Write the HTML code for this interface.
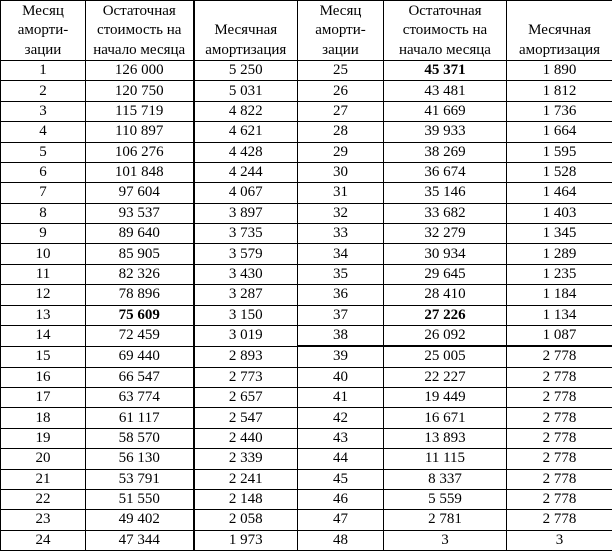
<!DOCTYPE html>
<html><head><meta charset="utf-8">
<style>
html,body{margin:0;padding:0;background:#fff;}
table{border-collapse:collapse;table-layout:fixed;width:612px;font-family:"Liberation Serif",serif;font-size:15px;color:#000;}
td{border:1px solid #000;text-align:center;padding:0;line-height:19px;height:19.375px;overflow:hidden;white-space:nowrap;}
tr.h td{height:59px;vertical-align:bottom;line-height:19.5px;}
td.c3{border-left:2px solid #000;}
tr.tk td.r{border-bottom:2px solid #000;}
b{font-weight:bold;}
</style></head><body>
<table>
<colgroup><col style="width:85px"><col style="width:108px"><col style="width:104px"><col style="width:86px"><col style="width:123px"><col style="width:106px"></colgroup>
<tr class="h"><td>Месяц<br>аморти-<br>зации</td><td>Остаточная<br>стоимость на<br>начало месяца</td><td class="c3">Месячная<br>амортизация</td><td>Месяц<br>аморти-<br>зации</td><td>Остаточная<br>стоимость на<br>начало месяца</td><td>Месячная<br>амортизация</td></tr>
<tr><td>1</td><td>126 000</td><td class="c3">5 250</td><td>25</td><td><b>45 371</b></td><td>1 890</td></tr>
<tr><td>2</td><td>120 750</td><td class="c3">5 031</td><td>26</td><td>43 481</td><td>1 812</td></tr>
<tr><td>3</td><td>115 719</td><td class="c3">4 822</td><td>27</td><td>41 669</td><td>1 736</td></tr>
<tr><td>4</td><td>110 897</td><td class="c3">4 621</td><td>28</td><td>39 933</td><td>1 664</td></tr>
<tr><td>5</td><td>106 276</td><td class="c3">4 428</td><td>29</td><td>38 269</td><td>1 595</td></tr>
<tr><td>6</td><td>101 848</td><td class="c3">4 244</td><td>30</td><td>36 674</td><td>1 528</td></tr>
<tr><td>7</td><td>97 604</td><td class="c3">4 067</td><td>31</td><td>35 146</td><td>1 464</td></tr>
<tr><td>8</td><td>93 537</td><td class="c3">3 897</td><td>32</td><td>33 682</td><td>1 403</td></tr>
<tr><td>9</td><td>89 640</td><td class="c3">3 735</td><td>33</td><td>32 279</td><td>1 345</td></tr>
<tr><td>10</td><td>85 905</td><td class="c3">3 579</td><td>34</td><td>30 934</td><td>1 289</td></tr>
<tr><td>11</td><td>82 326</td><td class="c3">3 430</td><td>35</td><td>29 645</td><td>1 235</td></tr>
<tr><td>12</td><td>78 896</td><td class="c3">3 287</td><td>36</td><td>28 410</td><td>1 184</td></tr>
<tr><td>13</td><td><b>75 609</b></td><td class="c3">3 150</td><td>37</td><td><b>27 226</b></td><td>1 134</td></tr>
<tr class="tk"><td>14</td><td>72 459</td><td class="c3">3 019</td><td class="r">38</td><td class="r">26 092</td><td class="r">1 087</td></tr>
<tr><td>15</td><td>69 440</td><td class="c3">2 893</td><td>39</td><td>25 005</td><td>2 778</td></tr>
<tr><td>16</td><td>66 547</td><td class="c3">2 773</td><td>40</td><td>22 227</td><td>2 778</td></tr>
<tr><td>17</td><td>63 774</td><td class="c3">2 657</td><td>41</td><td>19 449</td><td>2 778</td></tr>
<tr><td>18</td><td>61 117</td><td class="c3">2 547</td><td>42</td><td>16 671</td><td>2 778</td></tr>
<tr><td>19</td><td>58 570</td><td class="c3">2 440</td><td>43</td><td>13 893</td><td>2 778</td></tr>
<tr><td>20</td><td>56 130</td><td class="c3">2 339</td><td>44</td><td>11 115</td><td>2 778</td></tr>
<tr><td>21</td><td>53 791</td><td class="c3">2 241</td><td>45</td><td>8 337</td><td>2 778</td></tr>
<tr><td>22</td><td>51 550</td><td class="c3">2 148</td><td>46</td><td>5 559</td><td>2 778</td></tr>
<tr><td>23</td><td>49 402</td><td class="c3">2 058</td><td>47</td><td>2 781</td><td>2 778</td></tr>
<tr><td>24</td><td>47 344</td><td class="c3">1 973</td><td>48</td><td>3</td><td>3</td></tr>
</table>
</body></html>
